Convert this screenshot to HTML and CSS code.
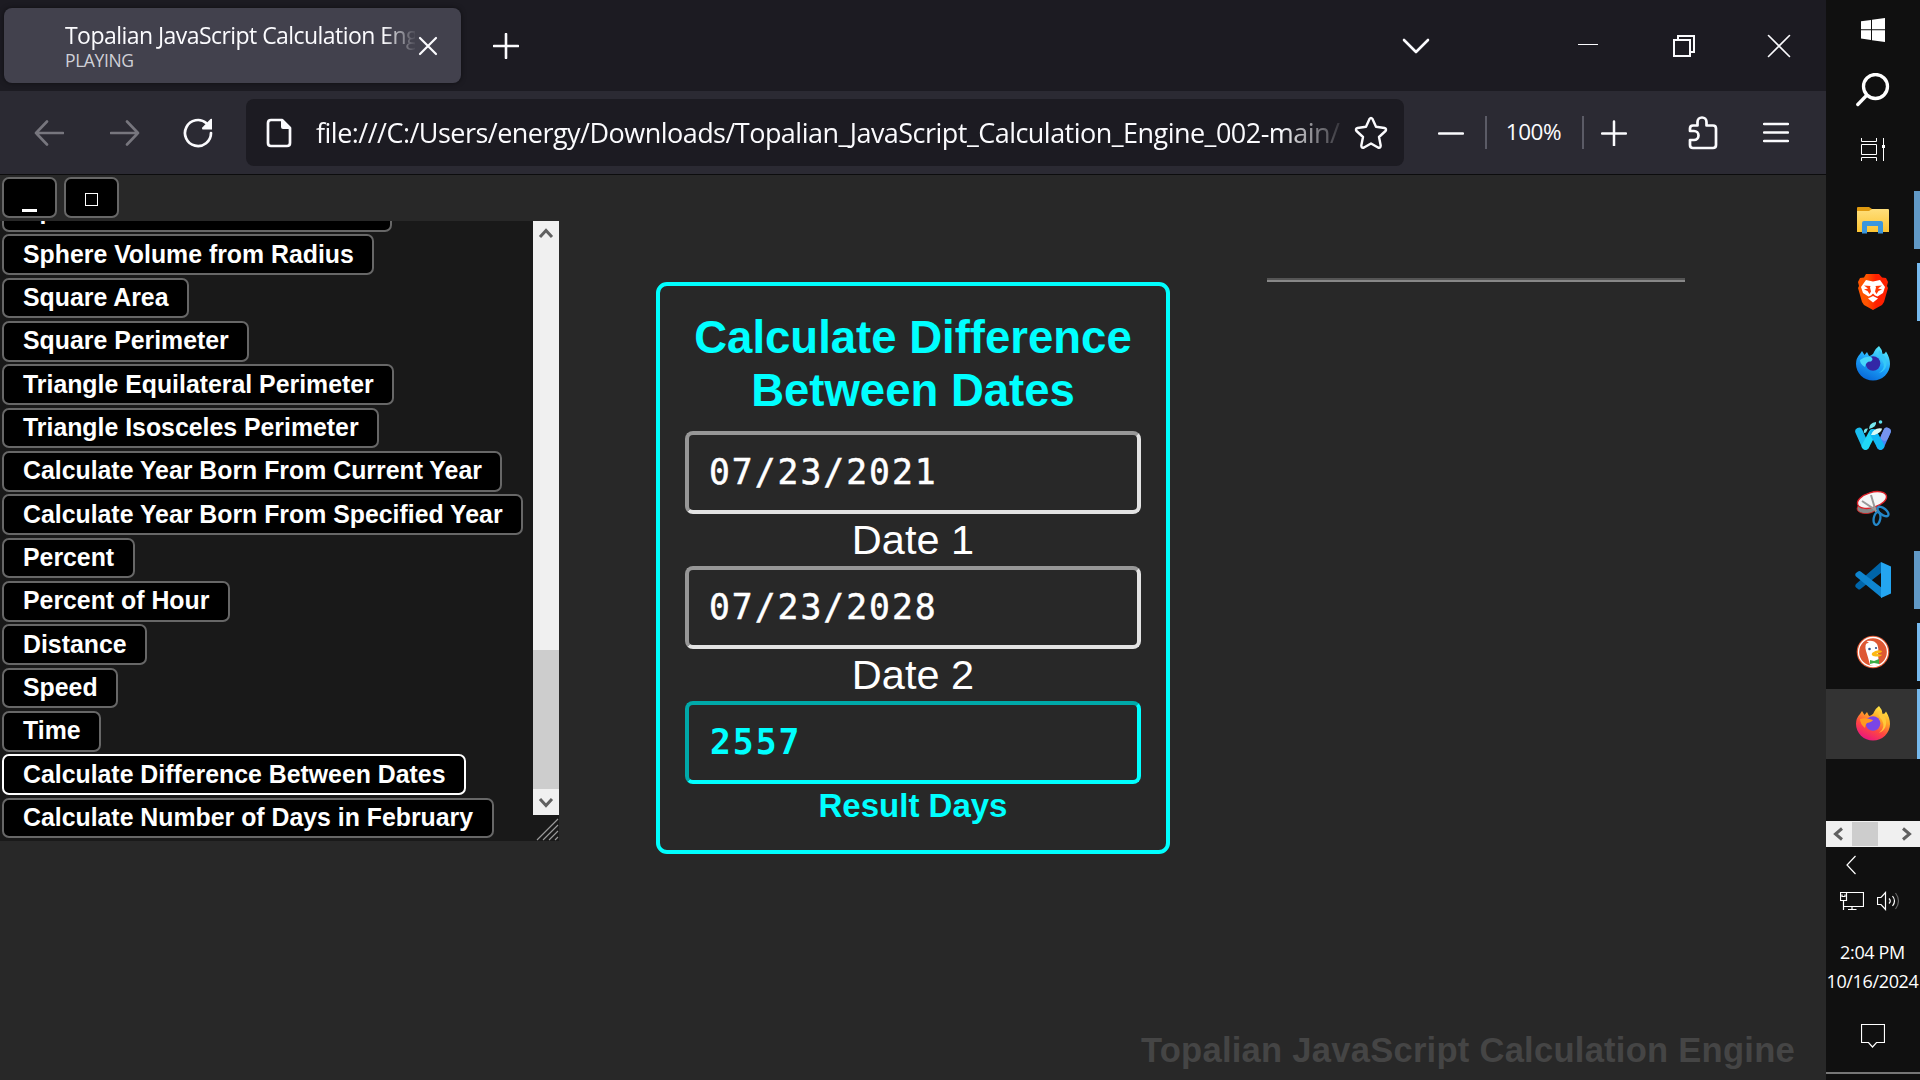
FILE: index.html
```html
<!DOCTYPE html>
<html lang="en">
<head>
<meta charset="utf-8">
<title>Topalian JavaScript Calculation Engine</title>
<link rel="stylesheet" href="styles.css">
</head>
<body>
<div class="desktop">
  <div class="browser">
    <header class="titlebar">
      <div class="tab">
        <div class="tab-label">
          <div class="tab-title"><span>Topalian JavaScript Calculation Engine</span></div>
          <div class="tab-sub">PLAYING</div>
        </div>
        <svg class="tab-close" width="20" height="20" viewBox="0 0 20 20"><path d="M2 2 18 18M18 2 2 18"/></svg>
      </div>
      <svg class="new-tab" width="26" height="26" viewBox="0 0 26 26"><path d="M13 1V25M1 13H25"/></svg>
      <svg class="all-tabs" width="28" height="18" viewBox="0 0 28 18"><path d="M2 3 14 15 26 3"/></svg>
      <svg class="win-min" width="20" height="20" viewBox="0 0 20 20"><path d="M0 9.500H20"/></svg>
      <svg class="win-max" width="22" height="22" viewBox="0 0 22 22"><path d="M1 5H17V21H1ZM5 5V1H21V17H17"/></svg>
      <svg class="win-close" width="24" height="24" viewBox="0 0 24 24"><path d="M1.500 1.500 22.500 22.500M22.500 1.500 1.500 22.500"/></svg>
    </header>
    <nav class="toolbar">
      <svg class="nav-back" width="30" height="26" viewBox="0 0 30 26"><path d="M29 13H2M13 1.500 2 13 13 24.500"/></svg>
      <svg class="nav-fwd" width="30" height="26" viewBox="0 0 30 26"><path d="M1 13H28M17 1.500 28 13 17 24.500"/></svg>
      <svg class="reload" width="32" height="32" viewBox="0 0 32 32"><path class="line" d="M29 16A13 13 0 1 1 24.500 6.200"/><path class="solid" d="M30 2V12.500H20.500Q19.500 11.500 20.300 10.500L28.500 2Q29.300 1.500 30 2Z"/></svg>
      <div class="urlbar">
        <svg class="doc" width="26" height="30" viewBox="0 0 26 30"><path class="line" d="M5 2H16L24 10V25Q24 28 21 28H5Q2 28 2 25V5Q2 2 5 2Z"/><path class="solid" d="M15 1.500 25 11H17Q15 11 15 9Z"/></svg>
        <div class="url"><span>file:///C:/Users/energy/Downloads/Topalian_JavaScript_Calculation_Engine_002-main/</span></div>
        <svg class="star" width="34" height="34" viewBox="0 0 34 34"><path d="M15.500 3Q17 .8 18.500 3L22 10.800 30.500 12Q33 12.600 31.500 15L25 21 26.700 29.500Q26.700 32.500 24 31.500L17 27.500 10 31.500Q7.300 32.500 7.300 29.500L9 21 2.500 15Q1 12.600 3.500 12L12 10.800Z"/></svg>
      </div>
      <svg class="zoom-out" width="26" height="26" viewBox="0 0 26 26"><path d="M1 13.500H25"/></svg>
      <div class="zoom-level">100%</div>
      <svg class="zoom-in" width="26" height="26" viewBox="0 0 26 26"><path d="M1 13.500H25M13 1.500V25.500"/></svg>
      <svg class="puzzle" width="30" height="34" viewBox="0 0 30 34"><path d="M5 9.500H9.500V6A4.500 4.500 0 0 1 18.500 6V9.500H25Q28 9.500 28 12.500V29Q28 32 25 32H5Q2 32 2 29V24H6A4.500 4.500 0 0 0 6 15H2V12.500Q2 9.500 5 9.500Z"/></svg>
      <svg class="menu" width="26" height="22" viewBox="0 0 26 22"><path d="M1 2H25M1 10.500H25M1 19H25"/></svg>
    </nav>
    <main class="page">
      <section class="left">
        <div class="mini-buttons">
          <button class="btn mini"><span class="dash"></span></button>
          <button class="btn mini"><span class="box"></span></button>
        </div>
        <div class="panel">
          <div class="list">
            <button class="btn cut">Sphere Surface from Radius</button>
            <button class="btn">Sphere Volume from Radius</button>
            <button class="btn">Square Area</button>
            <button class="btn">Square Perimeter</button>
            <button class="btn">Triangle Equilateral Perimeter</button>
            <button class="btn">Triangle Isosceles Perimeter</button>
            <button class="btn">Calculate Year Born From Current Year</button>
            <button class="btn">Calculate Year Born From Specified Year</button>
            <button class="btn">Percent</button>
            <button class="btn">Percent of Hour</button>
            <button class="btn">Distance</button>
            <button class="btn">Speed</button>
            <button class="btn">Time</button>
            <button class="btn current">Calculate Difference Between Dates</button>
            <button class="btn">Calculate Number of Days in February</button>
          </div>
          <div class="side">
            <div class="vscroll">
              <svg width="26" height="26" viewBox="0 0 26 26"><path d="M7 16 13 9.500 19 16"/></svg>
              <div class="vthumb"></div>
              <svg width="26" height="26" viewBox="0 0 26 26"><path d="M7 10 13 16.500 19 10"/></svg>
            </div>
            <svg class="grip" width="26" height="26" viewBox="0 0 26 26"><path d="M4 25 25 4M10 25 25 10M16 25 25 16M22 25 25 22"/></svg>
          </div>
        </div>
      </section>
      <section class="card">
        <h1>Calculate Difference<br>Between Dates</h1>
        <div class="field">07/23/2021</div>
        <div class="caption">Date 1</div>
        <div class="field">07/23/2028</div>
        <div class="caption">Date 2</div>
        <div class="field result">2557</div>
        <div class="caption result-caption">Result Days</div>
      </section>
      <section class="right">
        <div class="rule"></div>
        <div class="watermark">Topalian JavaScript Calculation Engine</div>
      </section>
    </main>
  </div>
  <aside class="taskbar">
    <div class="sys"><svg width="24" height="24" viewBox="0 0 24 24" fill="#fff"><path d="M0 3.300 10 1.900V11.300H0ZM11 1.700 24 0V11.300H11ZM0 12.300H10V21.900L0 20.500ZM11 12.300H24V24L11 22.200Z"/></svg></div>
    <div class="sys"><svg width="34" height="34" viewBox="0 0 34 34" fill="none" stroke="#fff" stroke-width="3.300" stroke-linecap="round"><circle cx="19.500" cy="13.500" r="12"/><path d="M10.500 22.500 1.800 31.500"/></svg></div>
    <div class="sys"><svg width="24" height="24" viewBox="0 0 24 24" fill="none" stroke="#fff" stroke-width="1"><path d="M.5 0V3.500H15.500V0M.5 6.500H15.500V16.500H.5ZM.5 23V19.500H15.500V23M22.500 0V23"/><path d="M21 7H24V10H21Z" fill="#fff" stroke="none"/></svg></div>

    <div class="app first multi"><svg width="36" height="36" viewBox="0 0 36 36"><defs><linearGradient id="fold" x2="0" y2="1"><stop stop-color="#ffdf7c"/><stop offset="1" stop-color="#fcc432"/></linearGradient></defs><path fill="#e09a10" d="M2 6Q2 5 3 5H14L17 7 16 12H2Z"/><path fill="url(#fold)" d="M2 9H14L17 7H33Q34 7 34 8V30H2Z"/><path fill="#3a96dd" d="M7 31.500V21Q7 19 9 19H26Q28 19 28 21V31.500H23V24H12V31.500Z"/></svg></div>
    <div class="app single"><svg width="36" height="36" viewBox="0 0 36 36"><defs><linearGradient id="brv"><stop offset=".3" stop-color="#ff5500"/><stop offset=".6" stop-color="#ff2000"/></linearGradient></defs><path fill="url(#brv)" d="M11 0H24L27 3.500 31 4 33 8 32 12 33 14 29 28 27 31 18 36 9 31 7 28 3 14 4 12 3 8 5 4 9 3.500Z"/><path fill="#fff" d="M11 6 18 7.500 25 6 30 13 28 19 22.500 22.500 20 21.500 18 19.500 16 21.500 13.500 22.500 8 19 6 13Z"/><path fill="#ff3b08" d="M9 11.500 15.500 12 15 13.500 16 17.500 14.500 20 12.500 17 9 15.500 13 14.500ZM27 11.500 20.500 12 21 13.500 20 17.500 21.500 20 23.500 17 27 15.500 23 14.500Z"/><path fill="#fff" d="M13 24.500 18 22 23 24.500 18 28.500Z"/></svg></div>
    <div class="app"><svg width="36" height="36" viewBox="0 0 36 36"><defs><linearGradient id="dev" x1=".8" y1="0" x2=".3" y2="1"><stop stop-color="#5ff0f8"/><stop offset=".5" stop-color="#1da5fa"/><stop offset="1" stop-color="#0867d8"/></linearGradient></defs><path fill="url(#dev)" d="M24 0Q27 3 27.500 8Q30 8 31 5.500Q35 12 35 18A17 16.500 0 0 1 1 18Q1 12 5 8L7 5 9.500 9 12 6 14 10Q18 9 19 6Q20 3 24 0Z"/><circle cx="18" cy="17.500" r="7.300" fill="#3327a6"/><path fill="#48d6fb" d="M5 14Q10 10 16 11Q19 13 16 15.500Q11 15 10 21Q5 18 5 14Z"/><path fill="#35c8f8" d="M24 4Q22 9 27 14Q32 22 24 27Q35 23 30 11Q28 9 27.500 8Z"/></svg></div>
    <div class="app"><svg width="36" height="36" viewBox="0 0 36 36" fill="none" stroke-linecap="round" stroke-linejoin="round"><path stroke="#19bdef" stroke-width="7.500" d="M4 13.500 10.500 28"/><path stroke="#4687fa" stroke-width="7.500" d="M25.500 28 32 13.500"/><path stroke="#7694ef" stroke-width="7.500" d="M32 13.500 29.500 19"/><path stroke="#20d8f8" stroke-width="7.500" d="M10.500 28 17.500 15"/><path stroke="#12b9f5" stroke-width="7.500" d="M18.500 15 25.500 28"/><path fill="#d9fbf6" d="M16 17Q19 9 27 10.500Q27 14 19.500 17Z"/><path fill="#77e9ef" d="M14 11Q14 5 21 4Q22 9 14 11ZM9 15Q8 10 13 10.500L11 14.500Z"/><circle cx="25.500" cy="4" r="1.800" fill="#5fe1ee"/></svg></div>
    <div class="app"><svg width="36" height="36" viewBox="0 0 36 36"><ellipse cx="12" cy="18" rx="10" ry="5.500" fill="#888" stroke="#d22" stroke-width=".8" transform="rotate(-6 12 18)"/><ellipse cx="17" cy="10" rx="15" ry="7.500" fill="#f6f6f6" stroke="#dc2028" stroke-width="1.400" transform="rotate(-17 17 10)"/><path d="M7 11 22 21M16 5 21 22" stroke="#999" stroke-width="2" fill="none"/><g fill="none" stroke="#2487c9" stroke-width="2.300"><ellipse cx="28" cy="21.500" rx="6.500" ry="3.200" transform="rotate(38 28 21.500)"/><ellipse cx="22" cy="28.500" rx="3.300" ry="6.500" transform="rotate(10 22 28.500)"/></g></svg></div>
    <div class="app multi"><svg width="36" height="36" viewBox="0 0 36 36"><path fill="#0065a9" d="M1 22 26 0V11L5.500 27Q4 28 3 27L1 25.500Q-.5 24 1 22Z"/><path fill="#0f85cf" d="M1 11 3 9.500Q4.500 8.500 6 9.700L27 26V36L1 14.500Q-.5 12.500 1 11Z"/><path fill="#24a5f0" d="M26 0 36 4.500V31.500L26 36Z"/></svg></div>
    <div class="app single"><svg width="36" height="36" viewBox="0 0 36 36"><circle cx="18" cy="18" r="16.300" fill="#de5833"/><circle cx="18" cy="18" r="14.500" fill="none" stroke="#fff" stroke-width="1.300"/><path fill="#fff" d="M15 31Q13 23 11 17Q9 8 14 9L11.500 7Q19 5.500 22 10Q24 14 23 20L24 31Q19 33 15 31Z"/><path fill="#fdb813" d="M17 19Q22 15 27 17Q27 19 21 19.500Q25 21 27 20.500Q26 23.500 18 22Q16 21 17 19Z"/><path fill="#3fae49" d="M15 26 19 27 24 25V30L19 29 15 30Z"/><circle cx="14.500" cy="15" r="1.300" fill="#31518b"/><circle cx="21" cy="14" r="1.100" fill="#31518b"/></svg></div>
    <div class="app single active"><svg width="36" height="36" viewBox="0 0 36 36"><defs><linearGradient id="ffx" x1=".8" y1="0" x2=".3" y2="1"><stop stop-color="#fff44f"/><stop offset=".35" stop-color="#ffa825"/><stop offset=".65" stop-color="#ff4840"/><stop offset="1" stop-color="#e81382"/></linearGradient></defs><path fill="url(#ffx)" d="M24 0Q27 3 27.500 8Q30 8 31 5.500Q35 12 35 18A17 16.500 0 0 1 1 18Q1 12 5 8L7 5 9.500 9 12 6 14 10Q18 9 19 6Q20 3 24 0Z"/><circle cx="18" cy="17.500" r="7.300" fill="#7a45e6"/><path fill="#ff9a20" d="M5 13Q10 11 18 14Q17 16 12 17Q10 19 10 22Q5 18 5 13Z"/><path fill="#ffc93a" d="M24 4Q22 9 27 14Q31 22 24 27Q34 22 30 11Q28 9 27.500 8Z"/></svg></div>

    <div class="hscroll">
      <svg width="26" height="26" viewBox="0 0 26 26"><path d="M16 7.500 9.500 13 16 18.500"/></svg>
      <div class="hthumb"></div>
      <svg width="26" height="26" viewBox="0 0 26 26"><path d="M9 7.500 15.500 13 9 18.500"/></svg>
    </div>
    <svg class="tray-more" width="10" height="20" viewBox="0 0 10 20"><path d="M9.500 1 1 10 9.500 19"/></svg>
    <div class="tray">
      <svg width="24" height="20" viewBox="0 0 24 20"><path d="M6 1.500H23.500V15.500H4M8 18.500H16.500M12 15.500V18.500M.5 1.500H6.500V9.500H.5ZM3.500 9.500V19M2 3.500V5.500H5V3.500"/></svg>
      <svg width="24" height="20" viewBox="0 0 24 20"><path d="M.5 6.500H4L8.500 1.500V18.500L4 13.500H.5ZM12 7.500Q14.500 10 12 12.500M15.500 5Q19.500 10 15.500 15"/><path class="dim" d="M18.500 2Q24.500 10 18.500 18"/></svg>
    </div>
    <div class="clock"><span class="time">2:04 PM</span><span class="date">10/16/2024</span></div>
    <svg class="notify" width="24" height="25" viewBox="0 0 24 25"><path d="M.5 .5H23.500V18.500H15.500L11.500 23 7.500 18.500H.5Z"/></svg>
    <div class="show-desktop"></div>
  </aside>
</div>
</body>
</html>
```
FILE: styles.css
```css
* { box-sizing: border-box; }
body { margin: 0; background: #101010; overflow: hidden; }
svg { display: block; flex: none; }
.desktop { display: flex; width: 1920px; height: 1080px; }
.browser {
  width: 1826px; height: 1080px; display: flex; flex-direction: column;
  font-family: "Open Sans", "Noto Sans", sans-serif; color: #fbfbfe;
}

/* title bar */
.titlebar { height: 91px; flex: none; background: #1c1b22; display: flex; align-items: center; padding-left: 4px; }
.titlebar svg path, .toolbar svg path { fill: none; stroke: #fbfbfe; stroke-width: 2.2; stroke-linecap: round; stroke-linejoin: round; }
.tab {
  width: 457px; height: 75px; border-radius: 8px; background: #42414d; display: flex;
  padding-left: 61px; box-shadow: 0 0 5px rgba(0, 0, 0, .5);
}
.tab-label { width: 350px; padding-top: 11px; white-space: nowrap; }
.tab-title {
  font-size: 23px; line-height: 32px; overflow: hidden; letter-spacing: -.55px;
  -webkit-mask-image: linear-gradient(to right, #000 318px, transparent 352px);
  mask-image: linear-gradient(to right, #000 318px, transparent 352px);
}
.tab-sub { font-size: 17.5px; line-height: 18px; letter-spacing: -.4px; color: #d0d0d7; }
.tab-close { margin: 28px 0 0 3px; }
.titlebar .new-tab { margin-left: 32px; }
.titlebar .new-tab path { stroke-width: 2.6; }
.titlebar .all-tabs { margin-left: 883px; }
.titlebar .all-tabs path { stroke-width: 2.6; }
.win-min { margin: 0 0 2px 148px; }
.win-max { margin-left: 75px; }
.win-close { margin-left: 72px; }
.titlebar .win-min path { stroke-width: 1; stroke-linecap: butt; }
.titlebar .win-max path { stroke-width: 2; stroke-linejoin: miter; stroke-linecap: butt; }
.titlebar .win-close path { stroke-width: 1.6; }

/* toolbar */
.toolbar {
  height: 84px; flex: none; background: #2b2a33; border-bottom: 1px solid #0c0c0d;
  display: flex; align-items: center; padding-left: 34px;
}
.toolbar .nav-back path, .toolbar .nav-fwd path { stroke: #77767e; stroke-width: 2.6; }
.nav-fwd { margin-left: 46px; }
.reload { margin-left: 42px; }
.toolbar .reload .line, .toolbar .doc .line { stroke-width: 2.7; }
.toolbar .solid { fill: #fbfbfe; stroke: none; }
.urlbar {
  margin-left: 32px; width: 1158px; height: 67px; border-radius: 8px; background: #1c1b22;
  display: flex; align-items: center; padding-left: 20px;
}
.url {
  margin-left: 24px; width: 1024px; overflow: hidden; white-space: nowrap; font-size: 27px; line-height: 40px; letter-spacing: -.53px;
  -webkit-mask-image: linear-gradient(to right, #000 964px, transparent 1032px);
  mask-image: linear-gradient(to right, #000 964px, transparent 1032px);
}
.star { margin-left: 14px; }
.toolbar .star path { stroke-width: 2.4; }
.toolbar .zoom-out path, .toolbar .zoom-in path, .toolbar .menu path { stroke-width: 2.5; }
.zoom-out { margin-left: 34px; }
.zoom-level {
  margin: 0 17px 0 21px; width: 99px; height: 33px; border: solid #5b5b66; border-width: 0 2px;
  font-size: 22.5px; line-height: 32px; text-align: center; letter-spacing: -.4px; padding-right: 2px;
}
.puzzle { margin-left: 61px; }
.toolbar .puzzle path { stroke-width: 2.7; }
.menu { margin-left: 45px; }

/* page */
.page {
  flex: 1; min-height: 0; background: #282828; display: flex; align-items: flex-start;
  font-family: "Liberation Sans", Arial, sans-serif; color: #fff;
}
.left { width: 559px; }
.mini-buttons { display: flex; gap: 7px; padding: 2px 0 0 2px; height: 46px; }
.btn {
  display: block; height: 40.7px; border: 2px solid #676767; border-radius: 7px; background: #000; color: #fff;
  font: bold 24.85px/36px "Liberation Sans", Arial, sans-serif; padding: 0 18.6px 0 19px; white-space: nowrap;
}
.mini { width: 55px; padding: 0; height: 41px; display: flex; justify-content: center; align-items: center; }
.box { width: 13px; height: 13px; border: 1px solid #fff; margin-top: 4px; }
.dash { width: 15px; height: 3px; background: #fff; margin-top: 25px; }
.panel { height: 620px; background: #191919; display: flex; overflow: hidden; }
.list { width: 533px; height: 620px; padding: 0 0 2.6px 2px; display: flex; flex-direction: column; justify-content: flex-end; align-items: flex-start; gap: 2.65px; overflow: hidden; }
.list .btn { flex: none; }
.cut { width: 390px; text-align: left; }
.current { border-color: #fff; }
.vscroll { width: 26px; height: 594px; background: #f0f0f0; display: flex; flex-direction: column; justify-content: space-between; }
.vscroll path, .hscroll path { fill: none; stroke: #606060; stroke-width: 3; }
.vthumb { height: 139px; margin-top: 403px; background: #cdcdcd; }
.grip path { stroke: #999; stroke-width: 1.2; }

.card {
  margin: 107px 0 0 97px; width: 514px; height: 572px; border: 4px solid #0ff; border-radius: 11px;
  padding: 25px 25px 0; text-align: center;
}
.card h1 { margin: 0 0 14px; font-size: 45.5px; line-height: 53px; color: #0ff; white-space: nowrap; }
.field {
  height: 83px; border: 4px solid; border-color: #979797 #e3e3e3 #e3e3e3 #979797; border-radius: 8px;
  padding-left: 20px; text-align: left; font: 34.7px/75px "DejaVu Sans Mono", monospace; letter-spacing: 1.98px;
  -webkit-text-stroke: .5px currentColor;
}
.caption { height: 52px; font-size: 41.5px; line-height: 52px; }
.result { border-color: #00a9a9 #0ff #0ff #00a9a9; color: #0ff; font-weight: bold; -webkit-text-stroke: 0; padding-left: 21px; }
.result-caption { font-size: 33px; font-weight: bold; line-height: 43px; color: #0ff; }
.right { width: 656px; height: 905px; display: flex; flex-direction: column; justify-content: space-between; align-items: flex-end; padding: 103px 31px 10px 0; }
.rule { width: 418px; height: 4px; margin-right: 110px; background: #888; border-top: 2px solid #555; }
.watermark { font-weight: bold; font-size: 34.6px; line-height: 40px; letter-spacing: .24px; color: #454545; white-space: nowrap; }

/* taskbar */
.taskbar {
  width: 94px; height: 1080px; background: #101010; color: #fff; display: flex; flex-direction: column; align-items: center;
  font-family: "Open Sans", "Noto Sans", sans-serif;
}
.sys { height: 60px; flex: none; display: flex; align-items: center; }
.app { width: 94px; height: 58px; flex: none; margin: 7px 0; display: flex; align-items: center; justify-content: center; }
.app.first { margin-top: 11px; }
.single { border-right: 3px solid #76b9ed; padding-left: 3px; }
.multi { padding-left: 6px; border-right: 6px solid #6199c6; border-image: linear-gradient(to right, #6199c6 50%, #4c779a 50% 83%, #6199c6 83%) 0 6 0 0; }
.active { height: 70px; margin: 1px 0; background: #333; }
.hscroll { width: 94px; height: 26px; flex: none; margin-top: 61px; background: #f0f0f0; display: flex; }
.hthumb { width: 26px; height: 24px; margin: 1px 16px 0 0; background: #cdcdcd; }
.tray-more { align-self: flex-start; margin: 8px 0 0 20px; }
.taskbar .tray-more path, .tray path, .notify path { fill: none; stroke: #fff; stroke-width: 1.2; }
.tray { display: flex; gap: 13px; margin-top: 16px; align-self: flex-start; padding-left: 14px; }
.tray .dim { stroke: #666; }
.clock { display: flex; flex-direction: column; align-items: center; margin-top: 27px; font-size: 18px; line-height: 29px; height: 59px; white-space: nowrap; letter-spacing: -.35px; padding-right: 1px; }
.notify { margin-top: 27px; }
.show-desktop { width: 94px; height: 2px; background: #777; margin-top: 23px; }
```
